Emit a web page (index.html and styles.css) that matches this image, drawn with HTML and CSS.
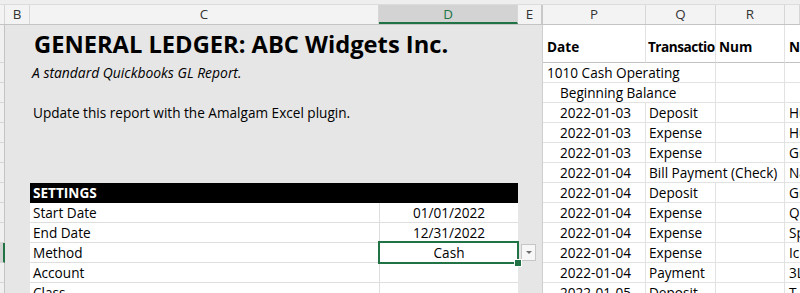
FILE: index.html
```html
<!DOCTYPE html>
<html lang="en">
<head>
  <meta charset="UTF-8" />
  <title>General Ledger - ABC Widgets Inc.</title>
  <link rel="stylesheet" href="styles.css">
</head>
<body>

<div class="excel">
  <div class="topbar"></div>

  <!-- Column letters -->
  <div class="colheads">
    <div class="ch col-rh"></div>
    <div class="ch col-b">B</div>
    <div class="ch col-c">C</div>
    <div class="ch col-d sel">D</div>
    <div class="ch col-e">E</div>
    <div class="ch col-p">P</div>
    <div class="ch col-q">Q</div>
    <div class="ch col-r">R</div>
    <div class="ch col-s"></div>
  </div>

  <div class="sheet">
    <!-- Row numbers (scrolled out of view, only the edge shows) -->
    <div class="rowheads">
      <div class="rh tall"></div>
      <div class="rh"></div><div class="rh"></div><div class="rh"></div>
      <div class="rh"></div><div class="rh"></div><div class="rh"></div>
      <div class="rh"></div><div class="rh"></div><div class="rh"></div>
      <div class="rh sel"></div><div class="rh"></div><div class="rh"></div>
    </div>

    <!-- Report pane -->
    <div class="left">
      <div class="title">GENERAL LEDGER: ABC Widgets Inc.</div>
      <div class="line subtitle">A standard Quickbooks GL Report.</div>
      <div class="line"></div>
      <div class="line">Update this report with the Amalgam Excel plugin.</div>
      <div class="line"></div>
      <div class="line"></div>
      <div class="line"></div>

      <div class="settings">
        <div class="set-head">SETTINGS</div>
        <div class="set-row"><div class="set-key">Start Date</div><div class="set-val">01/01/2022</div></div>
        <div class="set-row"><div class="set-key">End Date</div><div class="set-val">12/31/2022</div></div>
        <div class="set-row">
          <div class="set-key">Method</div>
          <div class="set-val active">Cash<span class="dropdown"></span></div>
        </div>
        <div class="set-row"><div class="set-key">Account</div><div class="set-val"></div></div>
        <div class="set-row"><div class="set-key">Class</div><div class="set-val"></div></div>
      </div>
    </div>

    <!-- Ledger data -->
    <div class="right">
      <div class="c hd first">Date</div>
      <div class="c hd tight">Transactio</div>
      <div class="c hd">Num</div>
      <div class="c hd last">Name</div>

      <div class="c span2 first">1010 Cash Operating</div>
      <div class="c"></div>
      <div class="c last"></div>

      <div class="c span2 ind">Beginning Balance</div>
      <div class="c"></div>
      <div class="c last"></div>

      <div class="c ind">2022-01-03</div><div class="c">Deposit</div><div class="c"></div><div class="c last">Hu</div>
      <div class="c ind">2022-01-03</div><div class="c">Expense</div><div class="c"></div><div class="c last">Hu</div>
      <div class="c ind">2022-01-03</div><div class="c">Expense</div><div class="c"></div><div class="c last">Gr</div>
      <div class="c ind">2022-01-04</div><div class="c span2">Bill Payment (Check)</div><div class="c last">Na</div>
      <div class="c ind">2022-01-04</div><div class="c">Deposit</div><div class="c"></div><div class="c last">Gr</div>
      <div class="c ind">2022-01-04</div><div class="c">Expense</div><div class="c"></div><div class="c last">Qu</div>
      <div class="c ind">2022-01-04</div><div class="c">Expense</div><div class="c"></div><div class="c last">Sp</div>
      <div class="c ind">2022-01-04</div><div class="c">Expense</div><div class="c"></div><div class="c last">Ic</div>
      <div class="c ind">2022-01-04</div><div class="c">Payment</div><div class="c"></div><div class="c last">3L</div>
      <div class="c ind">2022-01-05</div><div class="c">Deposit</div><div class="c"></div><div class="c last">T</div>
    </div>
  </div>
</div>

</body>
</html>
```

FILE: styles.css
```css
* { box-sizing: border-box; }
body {
  margin: 0;
  font-family: 'Open Sans', sans-serif;
  font-size: 13.6px;
  color: #000;
  background: #fff;
}
.excel {
  width: 800px;
  height: 293px;
  overflow: hidden;
}
.topbar {
  height: 5px;
  background: #eeeeee;
  border-bottom: 1px solid #dcdcdc;
}

/* column letters */
.colheads {
  display: flex;
  height: 20px;
  background: #f3f3f3;
  border-bottom: 1px solid #c4c4c4;
  font-size: 13.4px;
}
.ch {
  flex: none;
  border-right: 1px solid #d6d6d6;
  text-align: center;
  line-height: 19px;
  color: #333;
}
.ch.sel {
  background: #d3d3d3;
  color: #217346;
  border-bottom: 2px solid #217346;
}
.col-rh { width: 5px; }
.col-b { width: 25px; }
.col-c { width: 349px; }
.col-d { width: 139px; }
.col-e { width: 25px; border-right: 2px solid #c8c8c8; }
.col-p { width: 103px; }
.col-q { width: 70px; }
.col-r { width: 69px; }
.col-s { flex: 1; }

.sheet {
  display: flex;
  height: 268px;
}
.rowheads {
  width: 5px;
  flex: none;
  background: #f0f0f0;
}
.rh {
  height: 20px;
  border-bottom: 1px solid #d6d6d6;
  border-right: 1px solid #c4c4c4;
}
.rh.tall { height: 38px; }
.rh.sel {
  background: #d3d3d3;
  border-right: 2px solid #217346;
}

/* report pane */
.left {
  width: 538px;
  flex: none;
  background: #e6e6e6;
  padding-left: 25px;
  border-right: 1px solid #cfcfcf;
}
.title {
  height: 38px;
  padding: 3px 0 0 4px;
  line-height: 32px;
  font-size: 23.7px;
  font-weight: bold;
  white-space: nowrap;
}
.line {
  height: 20px;
  padding: 1px 0 0 3px;
  line-height: 18px;
  white-space: nowrap;
}
.subtitle {
  font-style: italic;
  padding-left: 2px;
  font-size: 13.9px;
}

.settings {
  width: 488px;
}
.set-head {
  height: 20px;
  background: #000;
  color: #fff;
  font-weight: bold;
  padding: 1px 0 0 3px;
  line-height: 18px;
}
.set-row {
  display: flex;
  height: 20px;
  background: #fff;
  border-bottom: 1px solid #dedede;
  line-height: 18px;
}
.set-key {
  width: 350px;
  padding: 1px 0 0 3px;
  border-right: 1px solid #dedede;
}
.set-val {
  flex: 1;
  padding-top: 1px;
  text-align: center;
}
.set-val.active {
  position: relative;
}
.set-val.active::before {
  content: "";
  position: absolute;
  left: -2px;
  top: -2px;
  right: -1px;
  bottom: -2px;
  border: 2px solid #217346;
}
.set-val.active::after {
  content: "";
  position: absolute;
  right: -4px;
  bottom: -5px;
  width: 6px;
  height: 6px;
  background: #217346;
  border: 1px solid #fff;
}
.dropdown {
  position: absolute;
  left: 141px;
  top: 1px;
  width: 15px;
  height: 17px;
  background: #f7f7f7;
  border: 1px solid #c6c6c6;
}
.dropdown::after {
  content: "";
  position: absolute;
  left: 4px;
  top: 6px;
  border-left: 3px solid transparent;
  border-right: 3px solid transparent;
  border-top: 3px solid #6e6e6e;
}

/* ledger data */
.right {
  flex: 1;
  display: grid;
  grid-template-columns: 103px 70px 69px 1fr;
  grid-template-rows: 38px;
  grid-auto-rows: 20px;
  align-content: start;
  background: #fff;
}
.c {
  border-right: 1px solid #e2e2e2;
  border-bottom: 1px solid #e2e2e2;
  padding: 1px 0 0 3px;
  line-height: 18px;
  white-space: nowrap;
  overflow: hidden;
}
.c.hd {
  padding-top: 13px;
  font-weight: bold;
  border-bottom-color: #c2c2c2;
}
.c.tight { letter-spacing: -0.5px; padding-left: 2px; }
.c.first { padding-left: 4px; }
.c.last { padding-left: 4px; border-right: none; }
.ind { padding-left: 17px; }
.span2 { grid-column: span 2; }
```
